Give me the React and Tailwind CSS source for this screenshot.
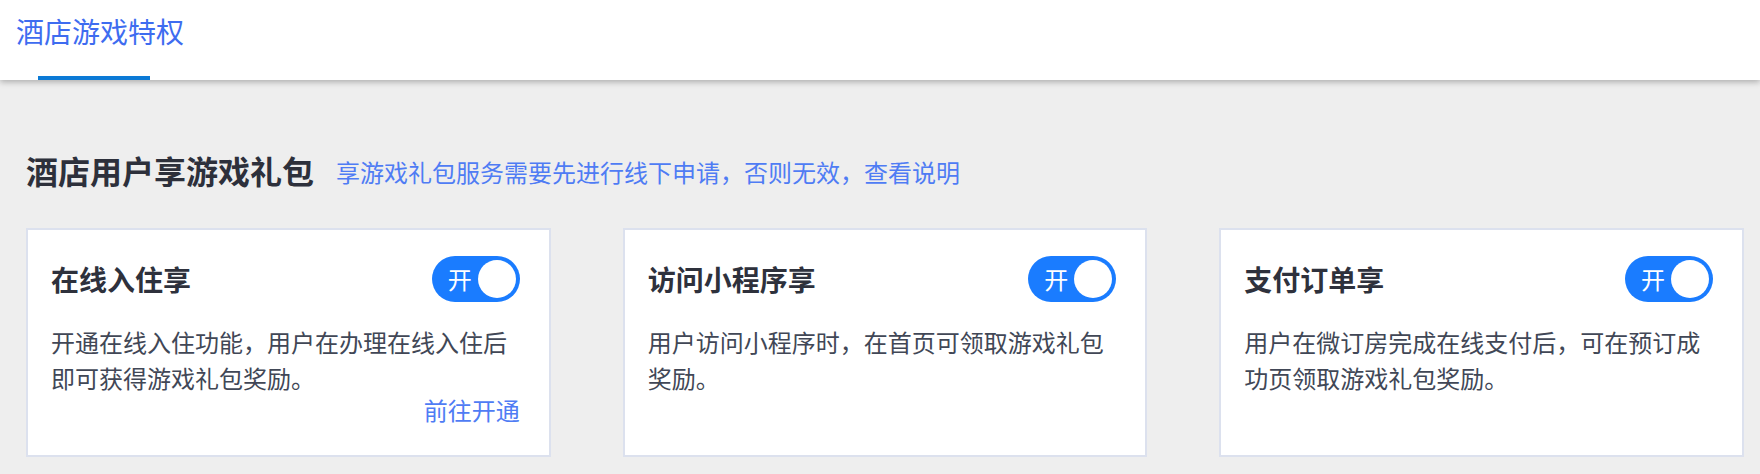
import { useState } from 'react';

const FONT = { fontFamily: '"Noto Sans CJK SC", "Noto Sans", sans-serif' };

const perks = [
  {
    title: '在线入住享',
    desc: '开通在线入住功能，用户在办理在线入住后即可获得游戏礼包奖励。',
    link: '前往开通',
  },
  {
    title: '访问小程序享',
    desc: '用户访问小程序时，在首页可领取游戏礼包奖励。',
  },
  {
    title: '支付订单享',
    desc: '用户在微订房完成在线支付后，可在预订成功页领取游戏礼包奖励。',
  },
];

function Toggle({ on, onChange }) {
  return (
    <button
      type="button"
      onClick={() => onChange(!on)}
      className={`flex items-center w-[88px] h-[46px] rounded-full px-[4px] shrink-0 ${on ? 'bg-[#1a7cff]' : 'bg-[#c5c8d0]'}`}
    >
      {on ? (
        <>
          <span className="ml-[12px] text-[24px] leading-[24px] text-white">开</span>
          <span className="ml-auto w-[38px] h-[38px] rounded-full bg-white" />
        </>
      ) : (
        <>
          <span className="w-[38px] h-[38px] rounded-full bg-white" />
          <span className="ml-auto mr-[12px] text-[24px] leading-[24px] text-white">关</span>
        </>
      )}
    </button>
  );
}

function PerkCard({ perk }) {
  const [on, setOn] = useState(true);
  return (
    <div className="w-[525px] h-[229px] bg-white border-2 border-[#dce1ee] pl-[23px] pr-[29px] pt-[26px]">
      <div className="flex items-center justify-between h-[46px]">
        <h3 className="text-[28px] leading-[36px] font-bold text-[#2e313c]">{perk.title}</h3>
        <Toggle on={on} onChange={setOn} />
      </div>
      <p className="mt-[22px] text-[24px] leading-[36px] text-[#414756]">{perk.desc}</p>
      {perk.link && (
        <div className="text-right text-[24px] leading-[28px] text-[#4f7cf4] cursor-pointer">{perk.link}</div>
      )}
    </div>
  );
}

export default function App() {
  return (
    <div className="min-h-[474px] bg-[#eeeeee] flex flex-col" style={FONT}>
      {/* Tabs */}
      <div className="relative z-10 h-[80px] bg-white shadow-[0_2px_6px_rgba(0,0,0,0.28)] flex flex-col justify-between">
        <div className="pl-[16px] pt-[17px] text-[28px] leading-[28px] text-[#3e6cf0]">酒店游戏特权</div>
        <div className="ml-[38px] w-[112px] h-[4px] bg-[#0b7ad6]" />
      </div>

      {/* Content */}
      <div className="pl-[26px] pr-[16px] pt-[68px]">
        <div className="flex items-center h-[44px]">
          <h2 className="text-[32px] leading-[44px] font-bold text-[#2d303b]">酒店用户享游戏礼包</h2>
          <span className="ml-[22px] mt-[4px] text-[24px] leading-[32px] text-[#4f7cf4] cursor-pointer">
            享游戏礼包服务需要先进行线下申请，否则无效，查看说明
          </span>
        </div>
        <div className="mt-[36px] flex gap-[72px]">
          {perks.map((p) => (
            <PerkCard key={p.title} perk={p} />
          ))}
        </div>
      </div>
    </div>
  );
}
